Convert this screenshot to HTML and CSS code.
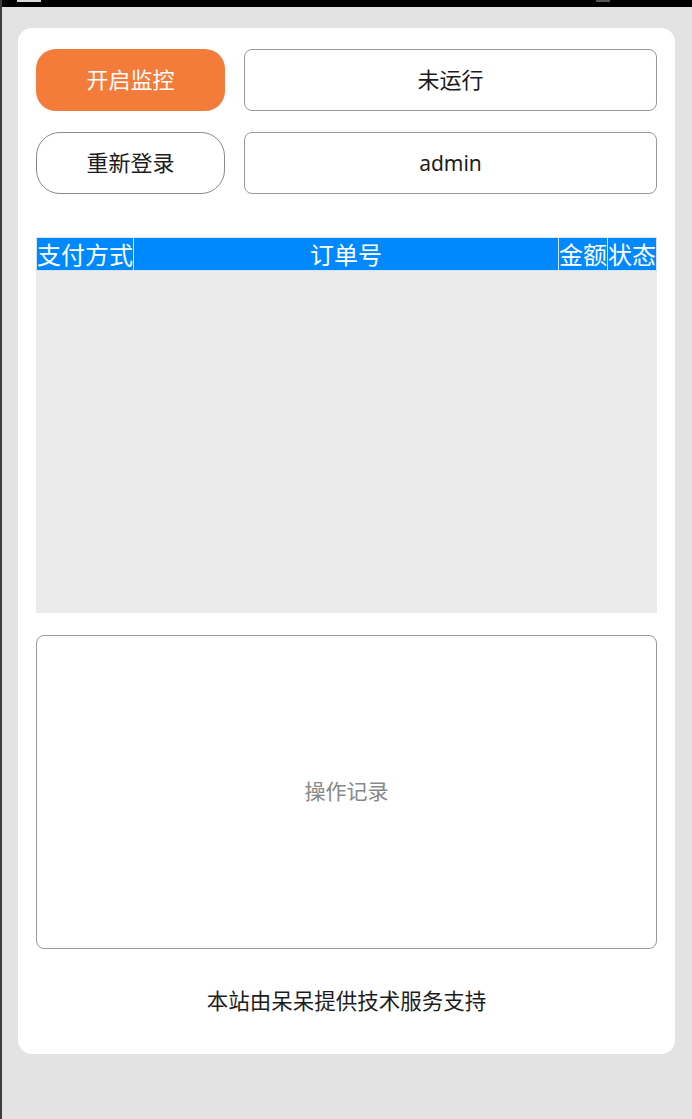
FILE: index.html
```html
<!DOCTYPE html>
<html lang="zh-CN">
<head>
<meta charset="utf-8">
<title>监控</title>
<link rel="stylesheet" href="styles.css">
</head>
<body>
<div class="statusbar">
  <span class="sb-left"></span>
  <span class="sb-right"></span>
</div>
<div class="page">
  <div class="card">
    <div class="row">
      <button class="btn btn-start">开启监控</button>
      <div class="box box-cjk">未运行</div>
    </div>
    <div class="row">
      <button class="btn btn-login">重新登录</button>
      <div class="box">admin</div>
    </div>
    <div class="orders">
      <table class="order-table">
        <thead>
          <tr>
            <th class="c-pay">支付方式</th>
            <th class="c-no">订单号</th>
            <th class="c-amt">金额</th>
            <th class="c-st">状态</th>
          </tr>
        </thead>
      </table>
    </div>
    <div class="log">操作记录</div>
    <div class="footer">本站由呆呆提供技术服务支持</div>
  </div>
</div>
</body>
</html>
```

FILE: styles.css
```css
html, body {
  margin: 0;
  padding: 0;
}
body {
  background: #e3e3e3;
  font-family: "Noto Sans", "Noto Sans CJK SC", sans-serif;
  color: #1c1c1c;
  min-height: 1119px;
  border-left: 2px solid #3a3d42;
  box-sizing: border-box;
}
.statusbar {
  height: 7px;
  background: #000;
  position: relative;
}
.sb-left {
  position: absolute;
  left: 15px;
  top: 0;
  width: 24px;
  height: 2px;
  background: #d8d8d8;
}
.sb-right {
  position: absolute;
  left: 594px;
  top: 0;
  width: 14px;
  height: 2px;
  background: #555;
}
.page {
  padding: 21px 17px 0 16px;
}
.card {
  background: #fff;
  border-radius: 14px;
  height: 1026px;
  box-sizing: border-box;
  padding: 21px 18px 0 18px;
  display: flex;
  flex-direction: column;
}
.row {
  display: flex;
  gap: 19px;
  height: 62px;
  margin-bottom: 21px;
}
.btn {
  width: 189px;
  height: 62px;
  flex: none;
  font-family: "Noto Sans CJK SC", sans-serif;
  font-size: 22px;
  padding: 0 0 5px 0;
  cursor: pointer;
}
.btn-start {
  background: #f47c3a;
  border: none;
  border-radius: 20px;
  color: #fff;
}
.btn-login {
  background: #fff;
  border: 1px solid #8a8a8a;
  border-radius: 24px;
  color: #1c1c1c;
}
.box {
  flex: 1;
  border: 1px solid #999;
  border-radius: 8px;
  display: flex;
  align-items: center;
  justify-content: center;
  font-size: 21px;
  color: #1c1c1c;
}
.box-cjk {
  font-size: 22px;
  padding-bottom: 5px;
  box-sizing: border-box;
}
.orders {
  margin-top: 22px;
  height: 376px;
  background: #ebebeb;
}
.order-table {
  width: 100%;
  border-collapse: collapse;
  background: #0088ff;
}
.order-table th {
  border: 1px solid #d6e4f2;
  color: #fff;
  font-weight: normal;
  font-size: 24px;
  line-height: 32px;
  padding: 0;
  white-space: nowrap;
  font-family: "Noto Sans CJK SC", sans-serif;
}
.c-pay { width: 96px; }
.c-amt, .c-st { width: 48px; }
.log {
  margin-top: 22px;
  height: 314px;
  box-sizing: border-box;
  border: 1px solid #999;
  border-radius: 8px;
  display: flex;
  align-items: center;
  justify-content: center;
  font-size: 21px;
  color: #888;
  padding-bottom: 5px;
}
.footer {
  margin-top: 37px;
  line-height: 30px;
  text-align: center;
  font-size: 21.5px;
  color: #1c1c1c;
}
```
